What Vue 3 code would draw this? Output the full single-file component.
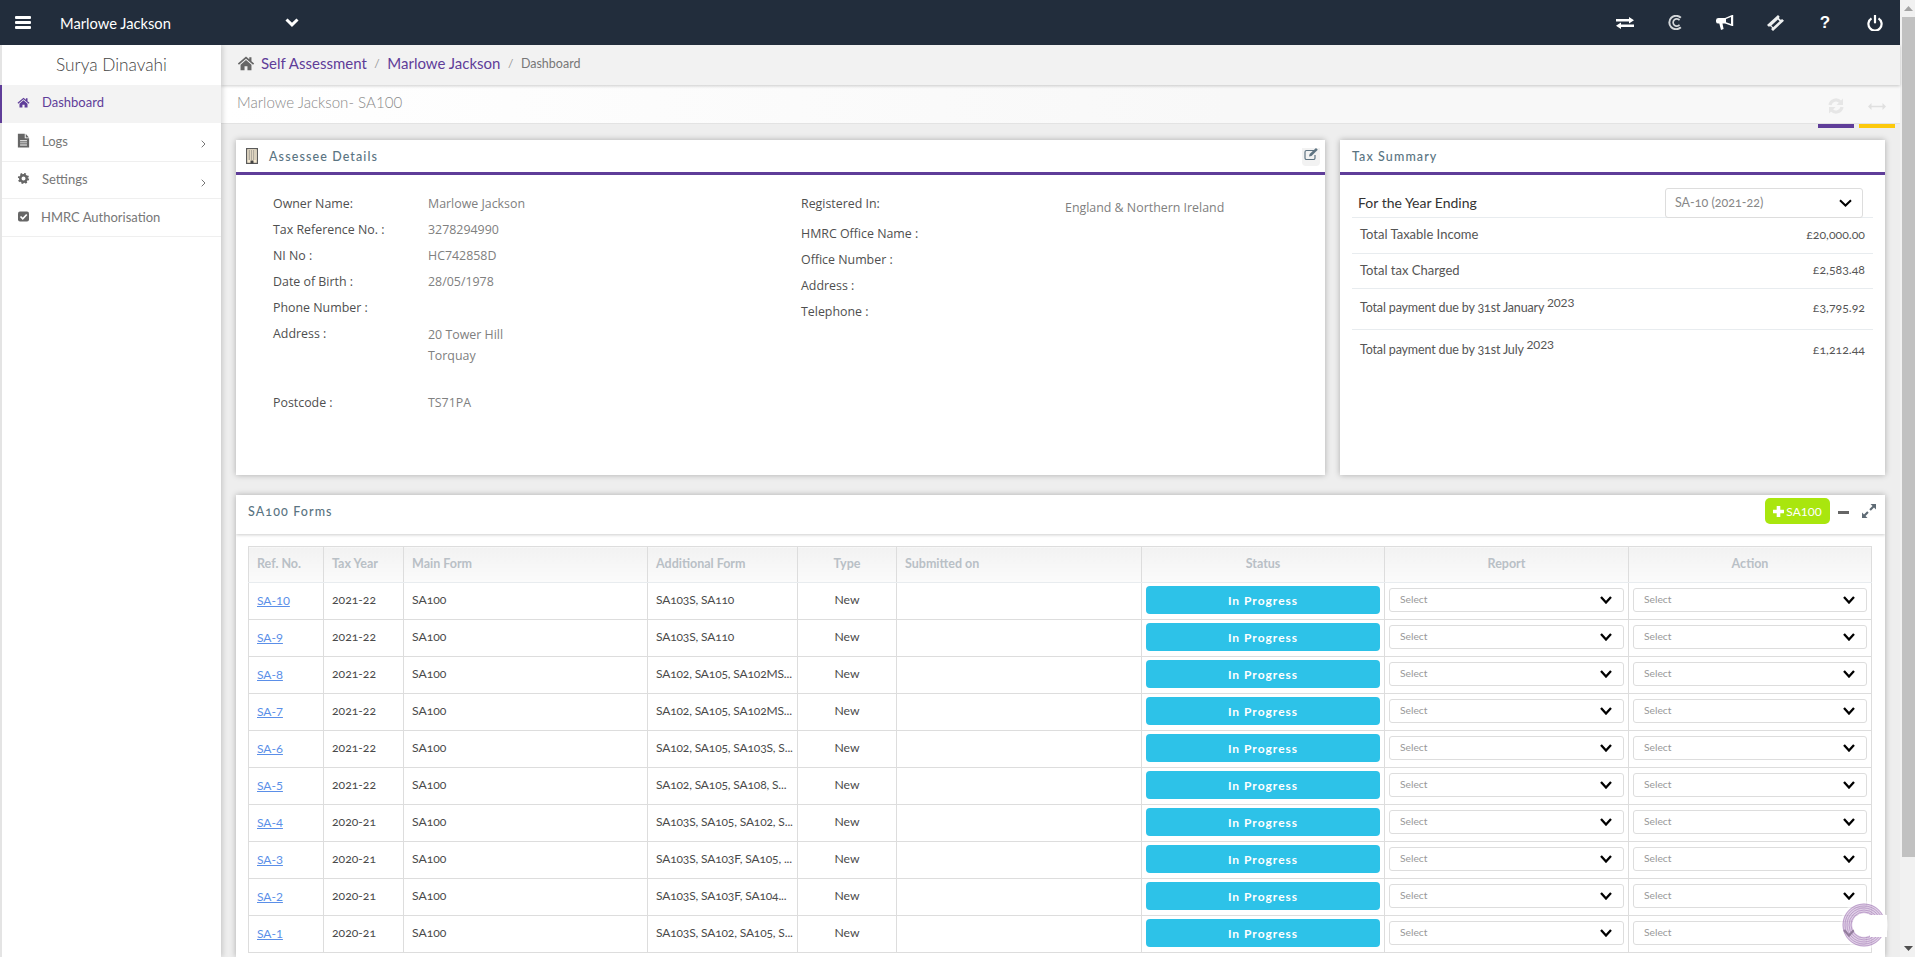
<script setup>
const leftRows = [
  ['Owner Name:', 'Marlowe Jackson'],
  ['Tax Reference No. :', '3278294990'],
  ['NI No :', 'HC742858D'],
  ['Date of Birth :', '28/05/1978'],
  ['Phone Number :', ''],
]
const rightLabels = ['HMRC Office Name :', 'Office Number :', 'Address :', 'Telephone :']
const rows = [
  ['SA-10', '2021-22', 'SA103S, SA110'],
  ['SA-9', '2021-22', 'SA103S, SA110'],
  ['SA-8', '2021-22', 'SA102, SA105, SA102MS...'],
  ['SA-7', '2021-22', 'SA102, SA105, SA102MS...'],
  ['SA-6', '2021-22', 'SA102, SA105, SA103S, S...'],
  ['SA-5', '2021-22', 'SA102, SA105, SA108, S...'],
  ['SA-4', '2020-21', 'SA103S, SA105, SA102, S...'],
  ['SA-3', '2020-21', 'SA103S, SA103F, SA105, ...'],
  ['SA-2', '2020-21', 'SA103S, SA103F, SA104...'],
  ['SA-1', '2020-21', 'SA103S, SA102, SA105, S...'],
]
</script>

<template>
  <div class="page">
    <div class="viewport">
      <header class="topbar">
        <svg class="burger" viewBox="0 0 16 13"><rect width="16" height="3" rx="1"/><rect y="5" width="16" height="3" rx="1"/><rect y="10" width="16" height="3" rx="1"/></svg>
        <span class="client">Marlowe Jackson</span>
        <svg class="client-chev" viewBox="0 0 14 9"><path d="M1.500 1.500 7 6.800 12.500 1.500" fill="none" stroke="#fff" stroke-width="3"/></svg>
        <div class="top-icons">
          <span class="top-icon"><svg width="18" height="12" viewBox="0 0 18 12" fill="#fff"><path d="M0 2h13V0l5 3.200-5 3.300v-2H0zM18 7.500H5v-2L0 8.800 5 12v-2h13z"/></svg></span>
          <span class="top-icon"><svg width="15" height="15" viewBox="0 0 15 15" fill="none" stroke="#d3d6d9"><path d="M12.800 2.800A6.700 6.700 0 1 0 12.800 12.200" stroke-width="2"/><path d="M11.500 5.200A3.600 3.600 0 1 0 11.500 9.800" stroke-width="1.700"/></svg></span>
          <span class="top-icon"><svg width="18" height="16" viewBox="0 0 18 16" fill="#fff"><path d="M16 0h1.200v11H16L9 8.600H6.500L7.600 14 5 15 3.300 8.600H2.500A2.500 2.500 0 0 1 0 6V5.300a2.500 2.500 0 0 1 2.500-2.400H9zM15 2 10 4v3.200l5 1.800z" fill-rule="evenodd"/></svg></span>
          <span class="top-icon"><svg width="17" height="16" viewBox="0 0 17 16" fill="#eef0f1"><path d="M11 0l1.700 1.700a1.600 1.600 0 0 0 2.400 2.400L17 5.800 6 16l-1.800-1.800a1.600 1.600 0 0 0-2.400-2.400L0 10zM10.900 4.600 4.400 10.500l1.700 1.700L12.600 6.300z" fill-rule="evenodd"/></svg></span>
          <span class="top-icon qmark">?</span>
          <span class="top-icon"><svg width="16" height="16" viewBox="0 0 16 16" fill="none" stroke="#fff" stroke-width="2.200"><path d="M4.500 3.400a6.600 6.600 0 1 0 7 0"/><path d="M8 .5v7" stroke-linecap="round"/></svg></span>
        </div>
      </header>

      <div class="body">
        <aside class="sidebar">
          <div class="user">Surya Dinavahi</div>
          <div class="nav-item active">
            <svg class="nav-icon" viewBox="-2 -2 28 28" fill="currentColor"><path d="M12 3 0.800 12.600l1.500 1.700L12 6l9.700 8.300 1.500-1.700L19.500 9.600V4h-3v3z"/><path d="M4.500 14.500V21.500h5.500v-5.500h4v5.500h5.500v-7L12 8z"/></svg>
            <span>Dashboard</span>
          </div>
          <div class="nav-item logs">
            <svg class="nav-icon" viewBox="0 0 24 24" fill="currentColor"><path fill-rule="evenodd" d="M3 1h11v7.500h7V23H3zM6.500 11.500v1.500h11v-1.500zM6.500 15v1.500h11V15zM6.500 18.500v1.500h11v-1.500z"/><path d="M15.500 1.300 20.700 7h-5.200z"/></svg>
            <span>Logs</span>
            <svg class="nav-chev" viewBox="0 0 5 8"><path d="M.7.7 4 4 .7 7.300" fill="none" stroke="#777" stroke-width="1"/></svg>
          </div>
          <div class="nav-item">
            <svg class="nav-icon" viewBox="-3 -3 30 30" fill="none" stroke="currentColor"><circle cx="12" cy="12" r="6.500" stroke-width="5"/><circle cx="12" cy="12" r="9.500" stroke-width="3.500" stroke-dasharray="3.700 3.760"/></svg>
            <span>Settings</span>
            <svg class="nav-chev" viewBox="0 0 5 8"><path d="M.7.7 4 4 .7 7.300" fill="none" stroke="#777" stroke-width="1"/></svg>
          </div>
          <div class="nav-item hmrc">
            <svg class="nav-icon" viewBox="-3 -3 30 30"><rect x="1" y="2" width="22" height="20" rx="4" fill="currentColor"/><path d="M6 12l4.500 4.500L18.500 8" fill="none" stroke="#fff" stroke-width="3.500"/></svg>
            <span>HMRC Authorisation</span>
          </div>
        </aside>

        <main class="main">
          <div class="crumbs">
            <svg class="crumb-home" viewBox="0 0 24 22" fill="#666"><path d="M12 2 .8 11.600l1.500 1.700L12 5l9.700 8.300 1.500-1.700-3.700-3V3h-3v3z"/><path d="M4.500 13.500V21h5.500v-5.500h4V21h5.500v-7.500L12 7z"/></svg>
            <a class="crumb">Self Assessment</a><span class="sep">/</span>
            <a class="crumb">Marlowe Jackson</a><span class="sep">/</span>
            <span class="crumb-last">Dashboard</span>
          </div>

          <div class="titlebar">
            <span class="title">Marlowe Jackson- SA100</span>
            <div class="tools">
              <div class="tool purple">
                <svg width="16" height="16" viewBox="0 0 16 16" fill="none" stroke="#e6e6e6" stroke-width="3.200"><path d="M2 7a6 6 0 0 1 10.400-3"/><path d="M14 9a6 6 0 0 1-10.400 3"/><path d="M15 .5v6.500H8.500zM1 15.500V9h6.500z" fill="#e6e6e6" stroke="none"/></svg>
              </div>
              <div class="tool yellow">
                <svg width="18" height="7" viewBox="0 0 18 7" fill="#e0e0e0"><path d="M0 3.500 3.500 0v2.700h11V0L18 3.500 14.500 7V4.300h-11V7z"/></svg>
              </div>
            </div>
          </div>

          <div class="content">
            <div class="cards">
              <section class="card top-card">
                <div class="card-head purple-line">
                  <div class="head-left">
                    <svg class="bld" viewBox="0 0 12 16"><rect x=".6" y=".6" width="10.800" height="14.800" fill="#f6ead2" stroke="#5a5a5a" stroke-width="1.200"/><path d="M2.500 3h7M2.500 5h7M2.500 7h7M2.500 9h7M2.500 11h7" stroke="#6b6b6b" stroke-width="1" stroke-dasharray="1.500 .7"/><rect x="4.500" y="12.500" width="3" height="3" fill="#444"/></svg>
                    <h2 class="card-title">Assessee Details</h2>
                  </div>
                  <div class="edit-tab">
                    <svg width="14" height="12" viewBox="0 0 14 12" fill="none"><path d="M10 2.500H2.500A1.500 1.500 0 0 0 1 4v6a1.500 1.500 0 0 0 1.500 1.500h7A1.500 1.500 0 0 0 11 10V7" stroke="#5f7482" stroke-width="1.200"/><path d="M12 0l1.800 1.800L7.500 8 5 8.600l.6-2.500z" fill="#5f7482"/></svg>
                  </div>
                </div>
                <div class="details">
                  <div class="details-col left-col">
                    <div v-for="r in leftRows" :key="r[0]" class="d-row">
                      <span class="d-label">{{ r[0] }}</span><span class="d-value">{{ r[1] }}</span>
                    </div>
                    <div class="d-row addr">
                      <span class="d-label">Address :</span>
                      <span class="d-value">20 Tower Hill<br>Torquay</span>
                    </div>
                    <div class="d-row postcode">
                      <span class="d-label">Postcode :</span><span class="d-value">TS71PA</span>
                    </div>
                  </div>
                  <div class="details-col right-col">
                    <div class="d-row reg">
                      <span class="d-label wide">Registered In:</span>
                      <span class="d-value reg-val">England &amp; Northern Ireland</span>
                    </div>
                    <div v-for="l in rightLabels" :key="l" class="d-row">
                      <span class="d-label wide">{{ l }}</span>
                    </div>
                  </div>
                </div>
              </section>

              <section class="card top-card">
                <div class="card-head purple-line">
                  <h2 class="card-title plain">Tax Summary</h2>
                </div>
                <div class="tax">
                  <div class="tax-year">
                    <span class="year-label">For the Year Ending</span>
                    <div class="year-select">
                      <span>SA-10 (2021-22)</span>
                      <svg width="13" height="8" viewBox="0 0 13 8"><path d="M1 1.200 6.500 6.500 12 1.200" fill="none" stroke="#000" stroke-width="2"/></svg>
                    </div>
                  </div>
                  <div class="tax-row h36"><span>Total Taxable Income</span><span class="amt">£20,000.00</span></div>
                  <div class="tax-row h35"><span>Total tax Charged</span><span class="amt">£2,583.48</span></div>
                  <div class="tax-row h41"><span class="due">Total payment due by 31st January <sup>2023</sup></span><span class="amt">£3,795.92</span></div>
                  <div class="tax-row h41 last"><span class="due">Total payment due by 31st July <sup>2023</sup></span><span class="amt">£1,212.44</span></div>
                </div>
              </section>
            </div>

            <section class="card forms">
              <div class="card-head forms-head">
                <h2 class="card-title plain forms-title">SA100 Forms</h2>
                <div class="forms-tools">
                  <button class="add-btn">
                    <svg width="11" height="11" viewBox="0 0 11 11" fill="#fff"><path d="M3.700 0h3.600v3.700H11v3.600H7.300V11H3.700V7.300H0V3.700h3.700z"/></svg>
                    SA100
                  </button>
                  <svg class="minus" width="11" height="3" viewBox="0 0 11 3"><rect width="11" height="3" fill="#666"/></svg>
                  <svg class="expand" width="14" height="14" viewBox="0 0 14 14" fill="#5f6b75"><path d="M8.500 0H14v5.500L12 3.500 8.800 6.700 7.300 5.200 10.500 2zM5.500 14H0V8.500L2 10.500 5.200 7.300l1.500 1.500L3.500 12z"/></svg>
                </div>
              </div>
              <div class="table-wrap">
                <table class="grid">
                  <colgroup>
                    <col class="w75"><col class="w80"><col class="w244"><col class="w150"><col class="w99"><col class="w245"><col class="w243"><col class="w244"><col class="w243">
                  </colgroup>
                  <thead>
                    <tr>
                      <th>Ref. No.</th><th>Tax Year</th><th>Main Form</th><th>Additional Form</th>
                      <th class="c">Type</th><th>Submitted on</th><th class="c">Status</th><th class="c">Report</th><th class="c">Action</th>
                    </tr>
                  </thead>
                  <tbody>
                    <tr v-for="r in rows" :key="r[0]">
                      <td class="ref-cell"><a class="ref">{{ r[0] }}</a></td>
                      <td>{{ r[1] }}</td>
                      <td>SA100</td>
                      <td class="addl">{{ r[2] }}</td>
                      <td class="type">New</td>
                      <td></td>
                      <td class="status-cell"><div class="status">In Progress</div></td>
                      <td class="sel-cell"><div class="sel"><span>Select</span><svg width="12" height="8" viewBox="0 0 12 8"><path d="M1 1 6 6.500 11 1" fill="none" stroke="#000" stroke-width="2.300"/></svg></div></td>
                      <td class="sel-cell"><div class="sel"><span>Select</span><svg width="12" height="8" viewBox="0 0 12 8"><path d="M1 1 6 6.500 11 1" fill="none" stroke="#000" stroke-width="2.300"/></svg></div></td>
                    </tr>
                  </tbody>
                </table>
              </div>
            </section>
          </div>
        </main>
      </div>
    </div>

    <div class="scrollbar">
      <svg class="sb-arrow" width="9" height="5" viewBox="0 0 9 5"><path d="M4.500 0 9 5H0z" fill="#a3a3a3"/></svg>
      <div class="sb-thumb"></div>
      <svg class="sb-arrow down" width="9" height="5" viewBox="0 0 9 5"><path d="M0 0h9L4.500 5z" fill="#505050"/></svg>
    </div>

    <svg class="logo" width="50" height="50" viewBox="0 0 50 50">
      <circle cx="24" cy="25" r="24" fill="#fff" fill-opacity=".5"/>
      <circle cx="24" cy="25" r="16.500" fill="none" stroke="#b48fc4" stroke-opacity=".42" stroke-width="10"/>
      <g fill="none" stroke="#8f5fa8" stroke-opacity=".55" stroke-width=".8">
        <circle cx="24" cy="25" r="21"/>
        <circle cx="24" cy="25" r="19"/>
        <circle cx="24" cy="25" r="17"/>
        <circle cx="24" cy="25" r="15"/>
        <circle cx="24" cy="25" r="13"/>
      </g>
      <circle cx="24" cy="25" r="11.500" fill="#fff"/>
      <rect x="30" y="15" width="17" height="22" fill="#fff"/>
    </svg>
  </div>
</template>

<style>
html, body { margin: 0; overflow: hidden; background: #eee; }
</style>

<style scoped>
.page {
  position: relative;
  display: flex;
  width: 1915px;
  height: 957px;
  overflow: hidden;
  font-family: "Lato", "Open Sans", sans-serif;
  color: #555;
  font-size: 13px;
}
.viewport { width: 1900px; display: flex; flex-direction: column; }
.topbar {
  height: 45px;
  flex: none;
  background: #222d3c;
  display: flex;
  align-items: center;
  position: relative;
  z-index: 3;
}
.burger { width: 16px; height: 13px; margin: 0 0 0 15px; fill: #fff; }
.client { color: #fff; font-size: 14.700px; margin-left: 29px; width: 225px; }
.client-chev { width: 14px; height: 9px; }
.top-icons { margin-left: auto; display: flex; }
.top-icon { width: 50px; height: 45px; display: flex; align-items: center; justify-content: center; }
.qmark { color: #fff; font: 700 17px "Liberation Sans", sans-serif; }

.body { flex: 1; display: flex; min-height: 0; }
.sidebar {
  width: 219px;
  flex: none;
  background: #fff;
  border-left: 2px solid #e4e4e4;
  box-shadow: 2px 0 5px rgba(0,0,0,.15);
  position: relative;
  z-index: 2;
}
.user { height: 40px; box-sizing: border-box; padding: 0 0 2px; display: flex; align-items: center; justify-content: center; font-size: 17.300px; color: #444; font-weight: 300; }
.nav-item {
  height: 37px;
  display: flex;
  align-items: center;
  border-bottom: 1px solid #efefef;
  box-sizing: border-box;
  color: #777;
  font-size: 13px;
  position: relative;
  padding-left: 14px;
}
.nav-item span { margin-left: 11px; padding-bottom: 3px; }
.nav-item.logs { height: 39px; }
.nav-item.hmrc { height: 38px; }
.nav-item.hmrc span { margin-left: 10px; padding-bottom: 2px; }
.nav-item.active { background: #f3f3f3; color: #5f3d99; box-shadow: -2px 0 0 #5f3d99; height: 38px; border-bottom: 0; }
.nav-item.active span { padding-bottom: 4px; }
.nav-item.active .nav-icon { color: #5f3d99; }
.nav-icon { width: 15px; height: 15px; flex: none; color: #666; margin-bottom: 3px; }
.nav-chev { width: 5px; height: 8px; position: absolute; right: 15px; top: 17px; }

.main { flex: 1; min-width: 0; display: flex; flex-direction: column; }
.crumbs {
  height: 40px;
  flex: none;
  box-sizing: border-box;
  background: #f2f2f2;
  box-shadow: 0 1px 3px rgba(0,0,0,.2);
  display: flex;
  align-items: center;
  padding: 0 0 4px 16px;
  position: relative;
  z-index: 1;
}
.crumb-home { width: 18px; height: 16px; margin-right: 6px; }
.crumb { color: #5f3d99; font-size: 15px; }
.sep { color: #999; margin: 0 7.500px; font-size: 12px; }
.crumb-last { color: #777; font-size: 12.500px; }
.titlebar {
  height: 39px;
  flex: none;
  background: linear-gradient(90deg, #fff, #f8f8f8 60%);
  border-bottom: 1px solid #e3e3e3;
  box-sizing: border-box;
  display: flex;
  align-items: center;
  padding-left: 16px;
  padding-right: 5px;
  position: relative;
}
.title { color: #8a8a8a; font-size: 15.100px; font-weight: 300; margin-bottom: 5px; }
.tools { margin-left: auto; display: flex; gap: 5px; align-self: flex-start; height: 43px; }
.tool { width: 36px; box-sizing: border-box; display: flex; align-items: center; justify-content: center; padding-top: 3px; }
.tool.purple { border-bottom: 4px solid #5f3d99; }
.tool.yellow { border-bottom: 4px solid #fcc90c; }

.content { flex: 1; min-height: 0; background: #eee; padding: 16px 15px 0; display: flex; flex-direction: column; gap: 20px; }
.cards { display: grid; grid-template-columns: 1089fr 545fr; gap: 15px; }
.card { background: #fff; box-shadow: 0 0 6px rgba(0,0,0,.28); }
.top-card { height: 335px; }
.card-head { display: flex; justify-content: space-between; box-sizing: border-box; position: relative; }
.purple-line { height: 35px; border-bottom: 3px solid #5f3d99; }
.head-left { display: flex; align-items: center; padding-left: 10px; }
.bld { width: 12px; height: 16px; }
.card-title { margin: 0; font-size: 12.500px; font-weight: 500; letter-spacing: 1.100px; color: #5a7482; }
.head-left .card-title { margin-left: 11px; }
.plain { padding-left: 12px; line-height: 33px; }
.edit-tab { width: 18px; height: 18px; background: #f2f2f2; border-radius: 0 0 4px 4px; margin: 8px 5px 0 0; display: flex; justify-content: center; }

.details { display: flex; padding-top: 19px; padding-left: 37px; font-family: "Open Sans", sans-serif; font-size: 12.400px; }
.details-col { display: flex; flex-direction: column; }
.left-col { width: 528px; }
.d-row { display: flex; height: 26px; line-height: 20px; }
.d-label { width: 155px; color: #4f4f4f; flex: none; }
.d-value { color: #808080; }
.addr { height: 69px; }
.addr .d-value { line-height: 21px; }
.wide { width: 264px; }
.reg { height: 30px; }
.reg-val { padding-top: 4px; }

.tax { padding: 12px 12px 0; }
.tax-year { display: flex; align-items: center; justify-content: space-between; height: 30px; border-bottom: 1px solid #e8ecef; padding: 0 10px 0 6px; }
.year-label { font-size: 14px; color: #333; }
.year-select {
  width: 198px; height: 30px; box-sizing: border-box;
  border: 1px solid #ddd; border-radius: 3px;
  display: flex; align-items: center; justify-content: space-between;
  padding: 0 10px 0 9px; margin-bottom: -1px;
  color: #888; font-size: 12.500px; font-variant-numeric: oldstyle-nums;
}
.tax-row { display: flex; justify-content: space-between; align-items: center; padding: 0 8px 3px; border-bottom: 1px solid #e8ecef; font-size: 13px; color: #555; font-variant-numeric: oldstyle-nums; box-sizing: border-box; }
.due { font-size: 12.500px; letter-spacing: -.15px; }
.tax-row sup { font-size: 12px; line-height: 0; font-variant-numeric: lining-nums; }
.h36 { height: 36px; }
.h35 { height: 35px; }
.h41 { height: 41px; }
.last { border-bottom: 0; }
.amt { color: #555; font-size: 12.300px; }

.forms { flex: 1; min-height: 0; overflow: hidden; }
.forms-head { height: 39px; box-shadow: 0 1px 3px rgba(0,0,0,.2); }
.forms-title { padding-left: 12px; font-variant-numeric: oldstyle-nums; }
.forms-tools { display: flex; align-items: center; height: 26px; margin: 3px 9px 0 0; }
.add-btn {
  height: 26px; width: 65px; padding: 0; border: 0; border-radius: 5px;
  background: #a9e60e; color: #fff; font: 12px "Lato", sans-serif;
  display: flex; align-items: center; justify-content: center; gap: 2px; font-variant-numeric: lining-nums;
}
.minus { margin-left: 8px; margin-top: 2px; }
.expand { margin-left: 13px; }

.table-wrap { padding: 12px 14px 0 12px; }
.grid { width: 1623px; border-collapse: collapse; table-layout: fixed; font-size: 12.200px; }
.w75 { width: 75px; }
.w80 { width: 80px; }
.w244 { width: 244px; }
.w150 { width: 150px; }
.w99 { width: 99px; }
.w245 { width: 245px; }
.w243 { width: 243px; }
.grid th {
  height: 36px; padding: 0 0 3px 8px; text-align: left;
  background: linear-gradient(#f2f2f2, #fbfbfb);
  border: 1px solid #ddd; border-bottom-color: #e8ecef;
  color: #b9c0c6; font-weight: 700; font-size: 12.500px;
  box-sizing: border-box;
}
.grid th.c { text-align: center; padding: 0 0 3px; }
.grid td {
  height: 37px; padding: 0 0 3px 8px; box-sizing: border-box;
  border: 1px solid #ddd; color: #4a4a4a;
  font-variant-numeric: oldstyle-nums; white-space: nowrap;
}
.grid td.ref-cell { padding-bottom: 1px; }
.ref { color: #5b8fe8; text-decoration: underline; font-variant-numeric: lining-nums; font-size: 12px; }
.grid td.addl { font-size: 12px; letter-spacing: -.15px; padding-right: 0; }
.grid td.type { text-align: center; padding-left: 0; }
.grid td.status-cell { padding: 0 4px 2px; text-align: center; }
.status {
  height: 28px; background: #2dc2e8; border-radius: 4px; color: #fff;
  font-size: 12px; font-weight: 700; letter-spacing: 1px;
  display: flex; align-items: center; justify-content: center; font-family: "Lato", sans-serif;
}
.grid td.sel-cell { padding: 0 4px 2px; }
.sel {
  height: 24px; box-sizing: border-box; border: 1px solid #ddd; border-radius: 3px;
  display: flex; justify-content: space-between; align-items: center;
  padding: 0 11px 0 10px; font-size: 10.300px; color: #999;
}
.sel span { margin-bottom: 3px; }

.scrollbar {
  width: 15px; background: #f1f1f1; position: relative; display: flex; flex-direction: column; align-items: center;
}
.sb-thumb { position: absolute; top: 17px; left: 2px; right: 0; height: 840px; background: #c1c1c1; }
.sb-arrow { position: absolute; top: 6px; left: 4px; }
.sb-arrow.down { top: auto; bottom: 6px; }
.logo { position: absolute; left: 1840px; top: 900px; }
</style>
